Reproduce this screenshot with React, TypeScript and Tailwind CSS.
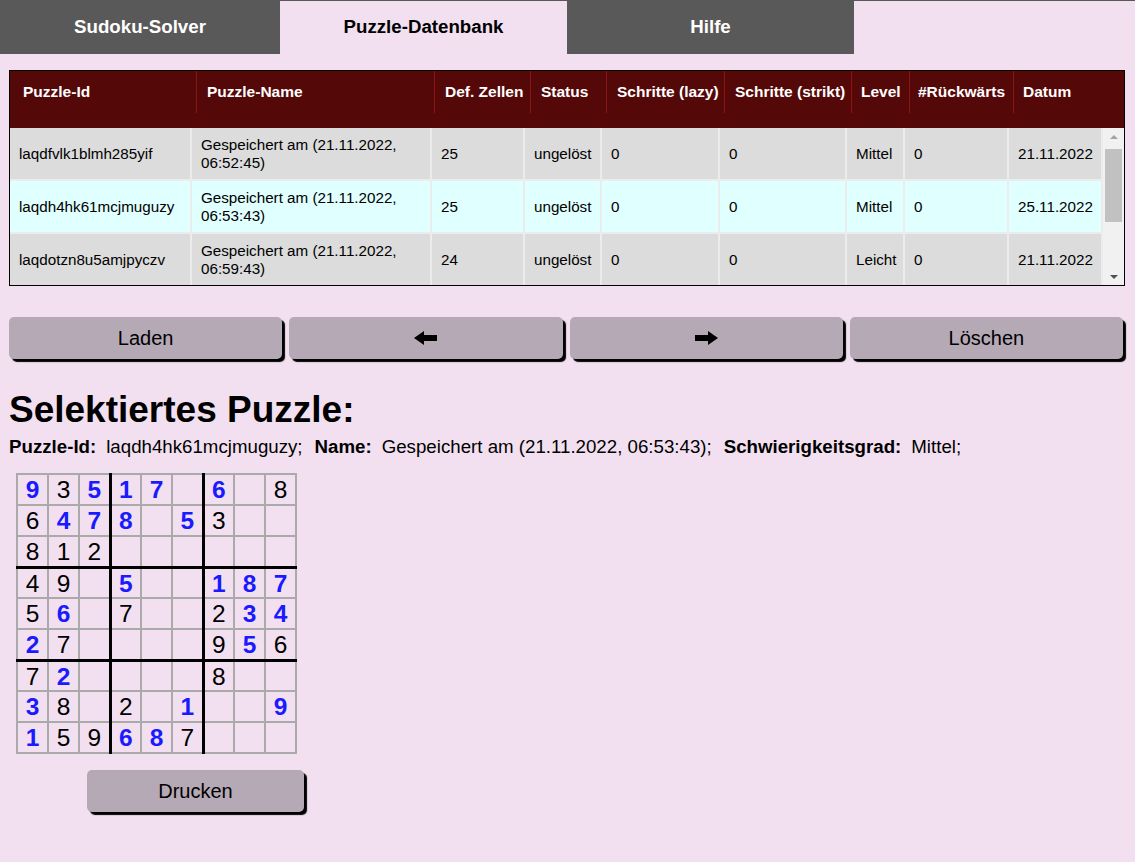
import React from 'react';

const FONT = { fontFamily: '"Liberation Sans", Arial, sans-serif' };

const headerCols = [
  { label: 'Puzzle-Id', w: 'w-[187px]', pl: 'pl-[13px]' },
  { label: 'Puzzle-Name', w: 'w-[238px]', pl: 'pl-[10px]' },
  { label: 'Def. Zellen', w: 'w-[96px]', pl: 'pl-[10px]' },
  { label: 'Status', w: 'w-[76px]', pl: 'pl-[10px]' },
  { label: 'Schritte (lazy)', w: 'w-[118px]', pl: 'pl-[10px]' },
  { label: 'Schritte (strikt)', w: 'w-[127px]', pl: 'pl-[10px]' },
  { label: 'Level', w: 'w-[58px]', pl: 'pl-[9px]' },
  { label: '#Rückwärts', w: 'w-[104px]', pl: 'pl-[8px]' },
  { label: 'Datum', w: 'flex-1', pl: 'pl-[9px]' },
];

interface PuzzleRow {
  id: string;
  name: string;
  defCells: number;
  status: string;
  lazy: number;
  strict: number;
  level: string;
  back: number;
  date: string;
}

const rows: PuzzleRow[] = [
  { id: 'laqdfvlk1blmh285yif', name: 'Gespeichert am (21.11.2022, 06:52:45)', defCells: 25, status: 'ungelöst', lazy: 0, strict: 0, level: 'Mittel', back: 0, date: '21.11.2022' },
  { id: 'laqdh4hk61mcjmuguzy', name: 'Gespeichert am (21.11.2022, 06:53:43)', defCells: 25, status: 'ungelöst', lazy: 0, strict: 0, level: 'Mittel', back: 0, date: '25.11.2022' },
  { id: 'laqdotzn8u5amjpyczv', name: 'Gespeichert am (21.11.2022, 06:59:43)', defCells: 24, status: 'ungelöst', lazy: 0, strict: 0, level: 'Leicht', back: 0, date: '21.11.2022' },
];

// 'b' prefix = solved cell (blue, bold), plain digit = given, '.' = empty
const grid = [
  ['b9', '3', 'b5', 'b1', 'b7', '.', 'b6', '.', '8'],
  ['6', 'b4', 'b7', 'b8', '.', 'b5', '3', '.', '.'],
  ['8', '1', '2', '.', '.', '.', '.', '.', '.'],
  ['4', '9', '.', 'b5', '.', '.', 'b1', 'b8', 'b7'],
  ['5', 'b6', '.', '7', '.', '.', '2', 'b3', 'b4'],
  ['b2', '7', '.', '.', '.', '.', '9', 'b5', '6'],
  ['7', 'b2', '.', '.', '.', '.', '8', '.', '.'],
  ['b3', '8', '.', '2', '.', 'b1', '.', '.', 'b9'],
  ['b1', '5', '9', 'b6', 'b8', '7', '.', '.', '.'],
];

function ArrowLeft() {
  return (
    <svg width="24" height="14" viewBox="0 0 24 14">
      <polygon points="0,7 10,0 10,4 23,4 23,10 10,10 10,14" fill="#000" />
    </svg>
  );
}

function ArrowRight() {
  return (
    <svg width="24" height="14" viewBox="0 0 24 14">
      <polygon points="24,7 14,0 14,4 1,4 1,10 14,10 14,14" fill="#000" />
    </svg>
  );
}

function Btn({ children, className = '' }: { children: React.ReactNode; className?: string }) {
  return (
    <button
      className={`h-[42px] rounded-[5px] bg-[#b5a9b5] shadow-[3px_3px_1px_#000] text-[20px] text-black flex items-center justify-center ${className}`}
    >
      {children}
    </button>
  );
}

export default function App() {
  return (
    <div className="min-h-screen w-[1135px] bg-[#f2e0f0] text-black" style={FONT}>
      {/* tabs */}
      <div className="flex border-t border-[#585858]">
        <div className="w-[280px] h-[53px] bg-[#595959] text-white font-bold text-[18.7px] flex items-center justify-center">
          Sudoku-Solver
        </div>
        <div className="w-[287px] h-[53px] text-black font-bold text-[18.7px] flex items-center justify-center">
          Puzzle-Datenbank
        </div>
        <div className="w-[287px] h-[53px] bg-[#595959] text-white font-bold text-[18.7px] flex items-center justify-center">
          Hilfe
        </div>
      </div>

      <div className="px-[9px]">
        {/* table */}
        <div className="mt-[16px] w-[1116px] border border-black">
          <div className="flex bg-[#550808] pb-[15px]">
            {headerCols.map((c, i) => (
              <div
                key={c.label}
                className={`${c.w} ${c.pl} h-[42px] flex items-center text-white font-bold text-[15.5px] whitespace-nowrap ${i < headerCols.length - 1 ? 'border-r border-[#8c1414]' : ''}`}
              >
                {c.label}
              </div>
            ))}
          </div>
          <div className="flex h-[157px] overflow-hidden">
            <div className="w-[1093px]">
              {rows.map((r, i) => {
                const bg = i === 1 ? 'bg-[#e0ffff]' : 'bg-[#dcdcdc]';
                const cell = `h-[53px] flex items-center pl-[9px] border-r-2 border-b-2 border-[#ececec] text-[15.2px] leading-[18px] ${bg}`;
                return (
                  <div key={r.id} className="grid grid-cols-[182px_240px_93px_77px_118px_127px_58px_104px_94px]">
                    <div className={cell}>{r.id}</div>
                    <div className={`${cell} pr-[8px]`}>{r.name}</div>
                    <div className={cell}>{r.defCells}</div>
                    <div className={cell}>{r.status}</div>
                    <div className={cell}>{r.lazy}</div>
                    <div className={cell}>{r.strict}</div>
                    <div className={cell}>{r.level}</div>
                    <div className={cell}>{r.back}</div>
                    <div className={`${cell} border-r-0`}>{r.date}</div>
                  </div>
                );
              })}
            </div>
            {/* scrollbar */}
            <div className="w-[21px] bg-[#f1f1f1] flex flex-col items-center">
              <div className="h-[17px] flex items-center justify-center">
                <div className="w-0 h-0 border-l-[4px] border-r-[4px] border-b-[4px] border-l-transparent border-r-transparent border-b-[#a3a3a3]" />
              </div>
              <div className="mt-[4px] w-[17px] h-[73px] bg-[#c1c1c1]" />
              <div className="flex-1" />
              <div className="h-[17px] flex items-center justify-center">
                <div className="w-0 h-0 border-l-[4px] border-r-[4px] border-t-[4px] border-l-transparent border-r-transparent border-t-[#505050]" />
              </div>
            </div>
          </div>
        </div>

        {/* action buttons */}
        <div className="mt-[31px] flex gap-[7px] w-[1114px]">
          <Btn className="flex-1">Laden</Btn>
          <Btn className="flex-1">
            <ArrowLeft />
          </Btn>
          <Btn className="flex-1">
            <ArrowRight />
          </Btn>
          <Btn className="flex-1">Löschen</Btn>
        </div>

        <h1 className="mt-[30px] text-[37px] leading-[42px] font-bold">Selektiertes Puzzle:</h1>
        <div className="mt-[5px] text-[18.7px] leading-[21px] flex whitespace-nowrap">
          <span className="font-bold">Puzzle-Id:</span>
          <span className="ml-[10px]">laqdh4hk61mcjmuguzy;</span>
          <span className="ml-[12px] font-bold">Name:</span>
          <span className="ml-[10px]">Gespeichert am (21.11.2022, 06:53:43);</span>
          <span className="ml-[12px] font-bold">Schwierigkeitsgrad:</span>
          <span className="ml-[10px]">Mittel;</span>
        </div>

        {/* sudoku grid */}
        <table className="mt-[16px] ml-[7px] border-collapse">
          <tbody>
            {grid.map((row, ri) => (
              <tr key={ri}>
                {row.map((v, ci) => {
                  const solved = v.startsWith('b');
                  const digit = v === '.' ? '' : v.replace('b', '');
                  const thickR = ci === 2 || ci === 5 ? 'border-r-[3px] border-r-black' : '';
                  const thickB = ri === 2 || ri === 5 ? 'border-b-[3px] border-b-black' : '';
                  return (
                    <td
                      key={ci}
                      className={`w-[31px] h-[31px] p-0 pt-[2px] border-2 border-[#aaaaaa] text-center align-middle leading-none text-[24.5px] ${thickR} ${thickB} ${solved ? 'font-bold text-[#1a1aff]' : 'text-black'}`}
                    >
                      {digit}
                    </td>
                  );
                })}
              </tr>
            ))}
          </tbody>
        </table>

        <Btn className="mt-[16px] ml-[78px] w-[217px]">Drucken</Btn>
        <div className="h-[40px]" />
      </div>
    </div>
  );
}
